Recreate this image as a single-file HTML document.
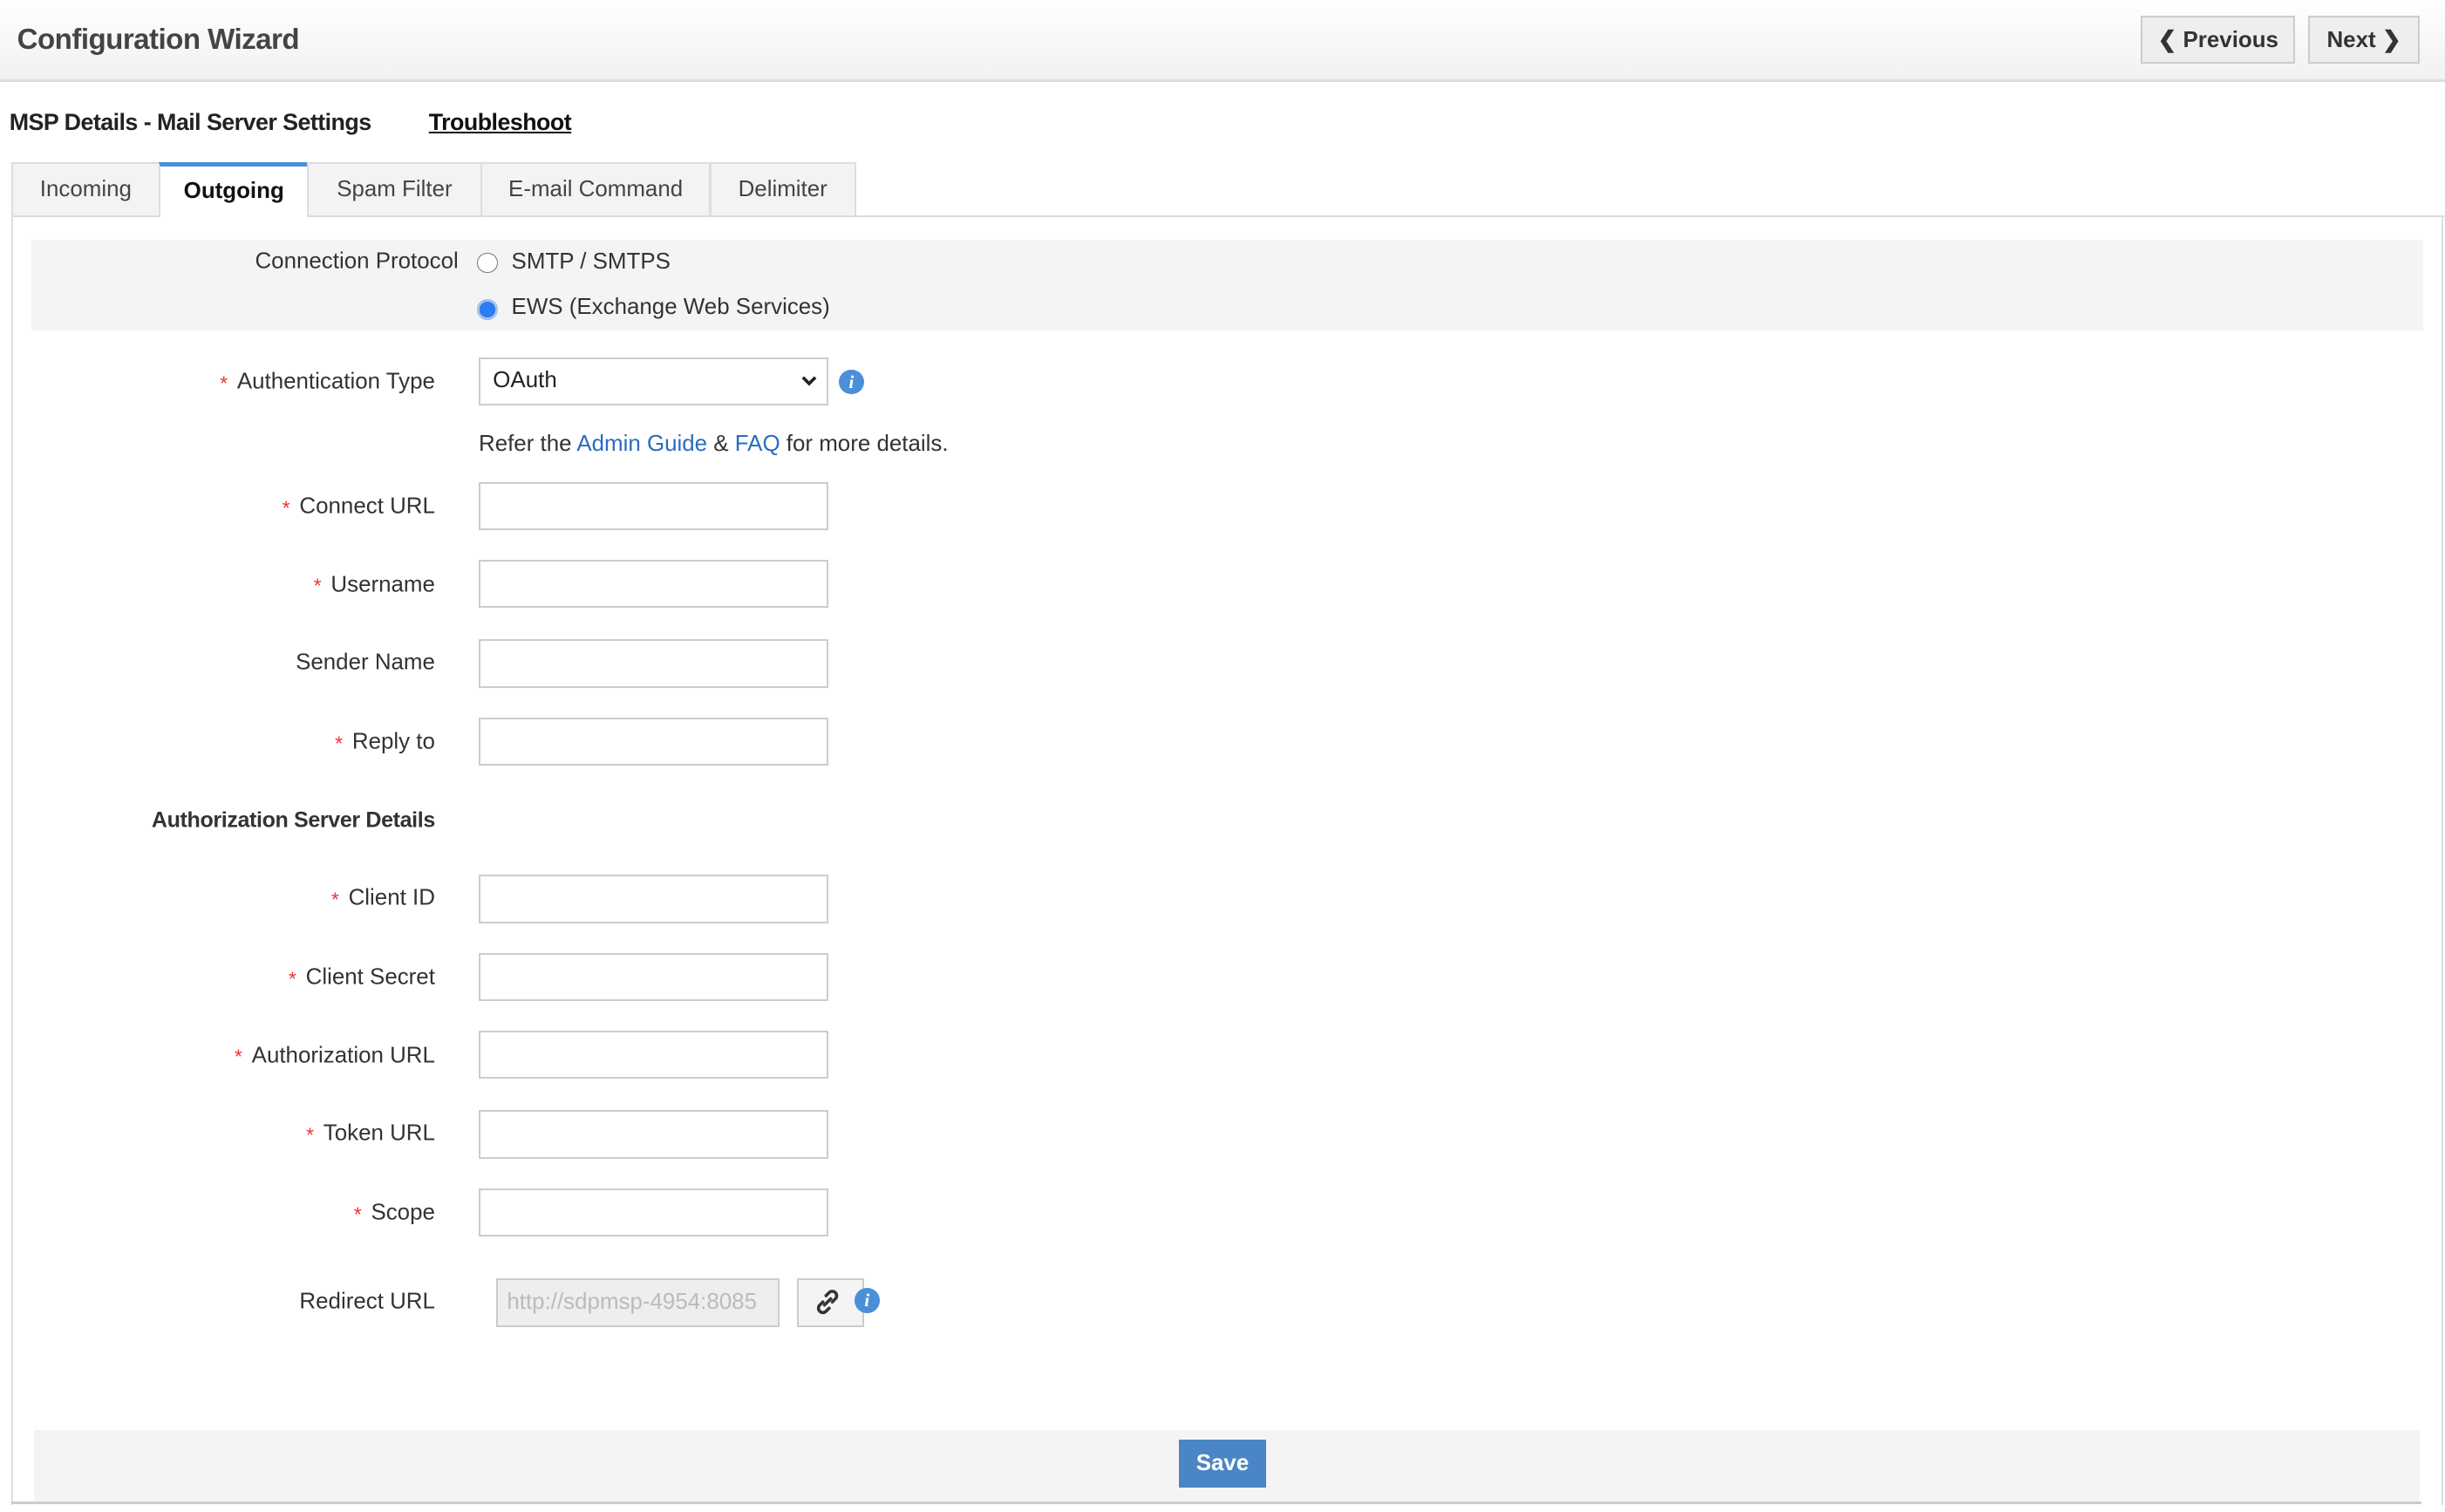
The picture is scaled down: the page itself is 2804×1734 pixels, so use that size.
<!DOCTYPE html>
<html><head><meta charset="utf-8"><style>
html,body{margin:0;padding:0;background:#fff;overflow:hidden}
body{width:2804px;height:1734px}
#w{zoom:1.78827;width:1568px;height:970px;position:relative;font-family:"Liberation Sans",sans-serif;color:#333;font-size:14px}
.a{position:absolute}
.hdr{left:0;top:0;width:1568px;height:51px;background:linear-gradient(#fff,#f1f1f1);border-bottom:2px solid #ddd}
.btn{background:#eee;border:1.5px solid #ccc;box-sizing:border-box;font-size:14.5px;font-weight:bold;color:#333;display:flex;align-items:center;justify-content:center}
.tab{top:104px;height:35px;box-sizing:border-box;background:#f3f3f3;border:1.5px solid #ddd;display:flex;align-items:center;justify-content:center;font-size:14.5px;color:#444}
.lbl{right:1289px;font-size:14.5px;white-space:nowrap;transform:translateY(-50%)}
.lbl b{color:#e33;font-weight:normal;font-size:13px;margin-right:6px;position:relative;top:1px}
.inp{left:307px;width:224px;height:31px;box-sizing:border-box;border:1.5px solid #ccc;background:#fff}
.info{width:16px;height:16px;border-radius:50%;background:#4a90d9;color:#fff;font:italic bold 12px "Liberation Serif",serif;display:flex;align-items:center;justify-content:center}
</style></head><body><div id="w">
<div class="a hdr"></div>
<div class="a" style="left:11px;top:15px;font-size:18.5px;color:#444;font-weight:bold;letter-spacing:-0.3px">Configuration Wizard</div>
<div class="a btn" style="left:1373px;top:10px;width:99px;height:31px">&#10094;&nbsp;Previous</div>
<div class="a btn" style="left:1480px;top:10px;width:72px;height:31px">Next&nbsp;&#10095;</div>
<div class="a" style="left:6px;top:70px;font-size:15px;font-weight:bold;color:#222;letter-spacing:-0.3px">MSP Details - Mail Server Settings</div>
<div class="a" style="left:275px;top:70px;font-size:15px;font-weight:bold;color:#111;text-decoration:underline;letter-spacing:-0.3px">Troubleshoot</div>
<div class="a" style="left:548px;top:138px;width:1020px;border-top:1.5px solid #ddd"></div>
<div class="a" style="left:7px;top:139px;height:826px;border-left:1.5px solid #ddd"></div>
<div class="a" style="left:1566px;top:139px;height:826px;border-left:1.5px solid #ddd"></div>
<div class="a tab" style="left:7px;width:96px">Incoming</div>
<div class="a tab" style="left:102px;width:96px;background:#fff;border-top:3px solid #4a90d9;border-bottom:none;color:#111;font-weight:bold">Outgoing</div>
<div class="a tab" style="left:197px;width:112px">Spam Filter</div>
<div class="a tab" style="left:308px;width:148px">E-mail Command</div>
<div class="a tab" style="left:455px;width:94px">Delimiter</div>
<div class="a" style="left:20px;top:154px;width:1534px;height:58px;background:#f4f4f4"></div>
<div class="a lbl" style="right:1274px;top:168px">Connection Protocol</div>
<div class="a" style="left:306px;top:162px;width:12px;height:12px;border:1px solid #777;border-radius:50%;background:#fff"></div>
<div class="a" style="left:328px;top:160px;font-size:14.5px">SMTP / SMTPS</div>
<div class="a" style="left:306px;top:192px;width:12px;height:12px;border:1px solid #9bf;border-radius:50%;background:#2d7cf6;box-shadow:inset 0 0 0 1px #bcd"></div>
<div class="a" style="left:328px;top:189px;font-size:14.5px">EWS (Exchange Web Services)</div>

<div class="a lbl" style="top:245px"><b>*</b>Authentication Type</div>
<div class="a inp" style="top:229px;padding:6px 8px;font-size:14.5px;color:#222">OAuth<svg style="position:absolute;right:6px;top:11px" width="10" height="7" viewBox="0 0 10 7"><path d="M1 1l4 4 4-4" stroke="#222" stroke-width="2" fill="none"/></svg></div>
<div class="a info" style="left:538px;top:237px">i</div>
<div class="a" style="left:307px;top:277px;font-size:14.5px">Refer the <span style="color:#2a6cc0">Admin Guide</span> &amp; <span style="color:#2a6cc0">FAQ</span> for more details.</div>

<div class="a lbl" style="top:325px"><b>*</b>Connect URL</div><div class="a inp" style="top:309px"></div>
<div class="a lbl" style="top:375px"><b>*</b>Username</div><div class="a inp" style="top:359px"></div>
<div class="a lbl" style="top:425px">Sender Name</div><div class="a inp" style="top:410px"></div>
<div class="a lbl" style="top:476px"><b>*</b>Reply to</div><div class="a inp" style="top:460px"></div>
<div class="a lbl" style="top:526px;font-weight:bold;font-size:14px;letter-spacing:-0.2px">Authorization Server Details</div>
<div class="a lbl" style="top:576px"><b>*</b>Client ID</div><div class="a inp" style="top:561px"></div>
<div class="a lbl" style="top:627px"><b>*</b>Client Secret</div><div class="a inp" style="top:611px"></div>
<div class="a lbl" style="top:677px"><b>*</b>Authorization URL</div><div class="a inp" style="top:661px"></div>
<div class="a lbl" style="top:727px"><b>*</b>Token URL</div><div class="a inp" style="top:712px"></div>
<div class="a lbl" style="top:778px"><b>*</b>Scope</div><div class="a inp" style="top:762px"></div>
<div class="a lbl" style="top:835px">Redirect URL</div>
<div class="a inp" style="left:318px;top:820px;width:182px;background:#eee;color:#bbb;font-size:14.5px;padding:6px 6px;overflow:hidden;white-space:nowrap">http://sdpmsp-4954:8085</div>
<div class="a" style="left:511px;top:820px;width:43px;height:31px;box-sizing:border-box;border:1.5px solid #ccc;background:#f4f4f4"></div>
<svg class="a" style="left:522px;top:826px" width="18" height="18" viewBox="0 0 18 18" fill="none" stroke="#333" stroke-width="2" stroke-linecap="round"><path d="M8 5l2-2a2.8 2.8 0 0 1 4 4l-2 2M10 13l-2 2a2.8 2.8 0 0 1-4-4l2-2M7 11l4-4"/></svg>
<div class="a info" style="left:548px;top:826px">i</div>

<div class="a" style="left:22px;top:917px;width:1530px;height:46px;background:#f4f4f4"></div>
<div class="a" style="left:756px;top:923px;width:56px;height:31px;background:#4a86c5;color:#fff;font-weight:bold;font-size:14.5px;display:flex;align-items:center;justify-content:center">Save</div>
<div class="a" style="left:7px;top:963px;width:1546px;border-top:2px solid #ccc"></div>
</div></body></html>
